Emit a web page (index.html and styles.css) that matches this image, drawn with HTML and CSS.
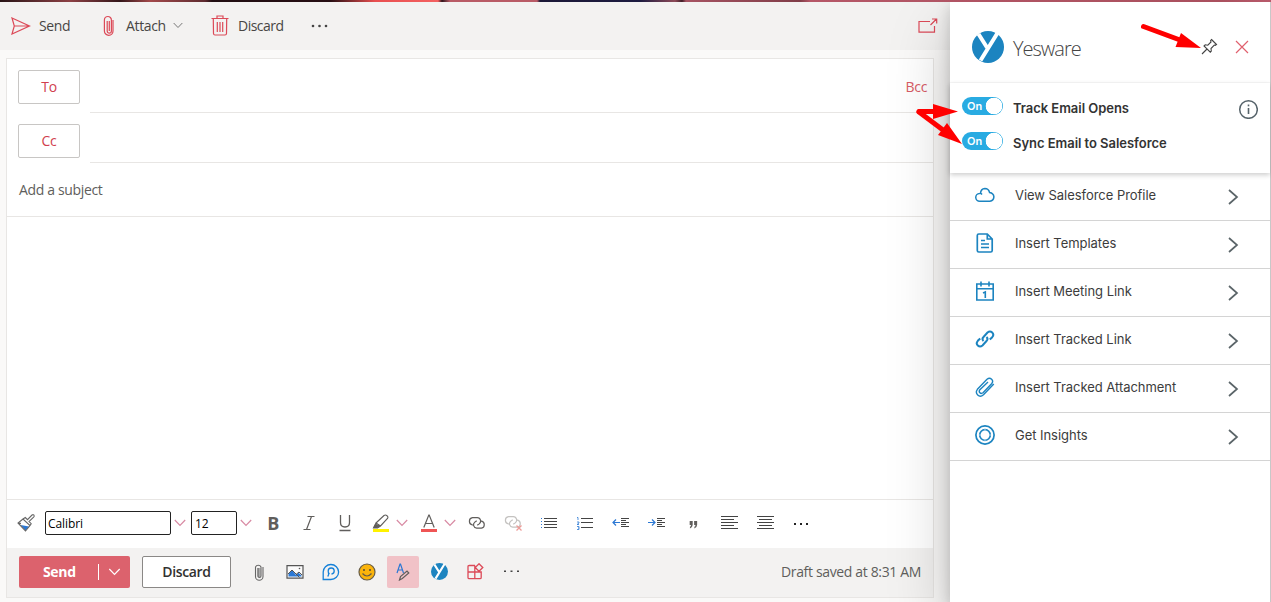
FILE: index.html
```html
<!DOCTYPE html>
<html lang="en">
<head>
<meta charset="utf-8">
<title>Compose</title>
<link rel="stylesheet" href="styles.css">
</head>
<body>
<svg width="0" height="0" class="defs">
  <symbol id="chev" viewBox="0 0 12 8"><path d="M.8 1l5.2 5.400L11.2 1" fill="none" stroke="currentColor" stroke-width="1.200"/></symbol>
  <symbol id="next" viewBox="0 0 12 18"><path d="M2 2l8 7-8 7" fill="none" stroke="#5a6468" stroke-width="1.700"/></symbol>
  <symbol id="logo" viewBox="0 0 32 32"><circle cx="16" cy="16" r="16" fill="#1c84c0"/><path d="M6.500 3L15 16.500M25.500 2L8.500 29.500" stroke="#fff" stroke-width="4" fill="none"/></symbol>
  <symbol id="links" viewBox="0 0 18 14"><path d="M6 9H4.500A3.700 3.700 0 0 1 4.500 1.700h4.800a3.400 3.400 0 0 1 1.700 6.300M12 5.200h1.500a3.600 3.600 0 0 1 0 7H8.700a3.400 3.400 0 0 1-1.700-6.200q.7-1 2-1M11 8q-.8 1-2 1" fill="none" stroke="currentColor" stroke-width="1.200"/></symbol>
</svg>
<div class="app">
  <div class="photo"></div>
  <div class="workspace">
    <main class="compose">
      <header class="commands">
        <svg class="c-send" width="20" height="18" viewBox="0 0 20 18" fill="none" stroke="#dc4a58" stroke-width="1.200"><path d="M1 1l17.500 8L1 17l2.300-8zM3.300 9h15"/></svg>
        <span class="t-send">Send</span>
        <svg class="c-clip" width="12" height="22" viewBox="0 0 12 22" fill="none" stroke="#dc4a58" stroke-width="1.200"><path d="M10 5v11a4.300 4.300 0 0 1-8.600 0V5a3.500 3.500 0 0 1 7 0v11a2.100 2.100 0 0 1-4.200 0V6"/><path d="M6.300 6v10"/></svg>
        <span class="t-attach">Attach</span>
        <svg class="c-chev" width="10" height="7"><use href="#chev"/></svg>
        <svg class="c-bin" width="18" height="21" viewBox="0 0 18 21" fill="none" stroke="#dc4a58" stroke-width="1.200"><path d="M.5 3.500h17M6 3.500V1h6v2.500M2.300 4l.2 14.500q.1 1.500 1.500 1.500h10q1.400 0 1.500-1.500L15.700 4M6.300 7v10M9 7v10M11.700 7v10"/></svg>
        <span class="t-discard">Discard</span>
        <svg class="c-more" width="17" height="4" fill="#444"><circle cx="2" cy="2" r="1.300"/><circle cx="8.500" cy="2" r="1.300"/><circle cx="15" cy="2" r="1.300"/></svg>
        <svg class="c-pop" width="20" height="15" viewBox="0 0 20 15" fill="none" stroke="#dc4a58" stroke-width="1.200"><path d="M12 3.500H1v10.700h15.500V8M12.500 7L18.500 1M14 1h4.700v4.600"/></svg>
      </header>
      <section class="card">
        <div class="field to"><button class="who">To</button><div class="entry"><span class="bcc">Bcc</span></div></div>
        <div class="field cc"><button class="who">Cc</button><div class="entry"></div></div>
        <div class="subject"><span>Add a subject</span></div>
        <div class="message"></div>
        <div class="format">
          <svg class="brush" width="18" height="18" viewBox="0 0 18 18" fill="none" stroke="#666" stroke-width="1.100"><path d="M3.500 11L12 12.500 8.500 16.500z" fill="#2b78d4" stroke="none"/><path d="M6 5L1 9l7.500 8 4.500-5.500zM6 5l2.300-1.500 2.200 2.200L15 1q1.500-.8 2 .3.500 1-.4 1.900L12 7.500l2.200 2.200L13 11.500M1 9l3 .4"/></svg>
          <div class="box family">Calibri</div><svg class="pick" width="12" height="8"><use href="#chev"/></svg>
          <div class="box size">12</div><svg class="pick" width="12" height="8"><use href="#chev"/></svg>
          <div class="tools">
            <b class="slot bold">B</b>
            <span class="slot"><svg width="16" height="18" fill="none" stroke="#605e5c" stroke-width="1.200"><path d="M6.500 2.500h7M2.500 15.500h7M10.500 2.500l-5 13"/></svg></span>
            <span class="slot"><svg width="16" height="18" fill="none" stroke="#605e5c" stroke-width="1.300"><path d="M3.500 1v7.500q0 4.500 4.500 4.500t4.500-4.500V1M2.500 16.500h11"/></svg></span>
            <span class="slot wide"><svg width="18" height="18" viewBox="0 0 18 18" fill="none" stroke="#605e5c" stroke-width="1.100"><path d="M1 15h16v3H1z" fill="#fff200" stroke="none"/><path d="M4 9l8-7.500q1.500-1 3 .2t.5 2.800L8.500 12zM4 9L1.500 14h4l3-2"/><path d="M3.500 10.500L2 13.500h3l2.500-1.800z" fill="#605e5c"/></svg><svg class="pick" width="12" height="8"><use href="#chev"/></svg></span>
            <span class="slot wide"><svg width="18" height="18" fill="none" stroke="#605e5c" stroke-width="1.200"><path d="M1 15h16v3H1z" fill="#ef5555" stroke="none"/><path d="M3.800 13.500L8.800 1h.4l5 12.500M5.300 9.500h7.500"/></svg><svg class="pick" width="12" height="8"><use href="#chev"/></svg></span>
            <span class="slot"><svg class="chain" width="18" height="14"><use href="#links"/></svg></span>
            <span class="slot"><svg class="nochain" width="18" height="18" viewBox="0 0 18 18"><use href="#links" width="18" height="14" y="1"/><path d="M12.500 11.500l5 5M17.500 11.500l-5 5" stroke="#ed9b98" stroke-width="1.300"/></svg></span>
            <span class="slot"><svg width="18" height="14" shape-rendering="crispEdges"><path d="M4 2.500h13M4 5.500h13M4 8.500h13M4 11.500h13" stroke="#444"/><path d="M1 2.500h1M1 5.500h1M1 8.500h1M1 11.500h1" stroke="#2b78d4"/></svg></span>
            <span class="slot"><svg width="18" height="14"><path d="M5 2.500h12M5 6.500h12M5 11.500h12" stroke="#444"/><path d="M1 1.500h1V4M1 6h2v1L1 8.500h2M1 10.500h2v3H1M2 12h1" fill="none" stroke="#2b78d4" stroke-width=".8"/></svg></span>
            <span class="slot"><svg width="18" height="12"><path d="M9 1.500h8M9 3.500h5M9 5.500h8M9 7.500h5M9 9.500h8" stroke="#444"/><path d="M8 5.500H1M4 2.500l-3 3 3 3" fill="none" stroke="#2b78d4" stroke-width="1.200"/></svg></span>
            <span class="slot"><svg width="18" height="12"><path d="M9 1.500h8M9 3.500h5M9 5.500h8M9 7.500h5M9 9.500h8" stroke="#444"/><path d="M0 5.500h7M4 2.500l3 3-3 3" fill="none" stroke="#2b78d4" stroke-width="1.200"/></svg></span>
            <span class="slot"><svg class="quote" width="9" height="8" viewBox="0 0 10 9"><path d="M.7 0h3.400v4.200Q4 7.300 1 8.300V6.500q1.200-.6 1.200-2.100H.7zM5.700 0h3.400v4.200Q9 7.300 6 8.300V6.500q1.200-.6 1.200-2.100H5.700z" fill="#605e5c"/></svg></span>
            <span class="slot"><svg width="18" height="14"><path d="M1 .5h17M1 3.500h13M1 6.500h17M1 9.500h13M1 12.500h17" stroke="#444"/></svg></span>
            <span class="slot"><svg width="18" height="14"><path d="M1 .5h17M3 3.500h13M1 6.500h17M3 9.500h13M1 12.500h17" stroke="#444"/></svg></span>
            <span class="slot"><svg class="dots" width="15" height="2" fill="#222"><path d="M0 0h2v2H0zM6 0h2v2h-2zM12 0h2v2h-2z"/></svg></span>
          </div>
        </div>
        <footer class="foot">
          <button class="send"><span>Send</span><i></i><svg width="13" height="8"><use href="#chev"/></svg></button>
          <button class="discard"><span>Discard</span></button>
          <div class="extras">
            <span class="slot"><svg width="10" height="18" viewBox="0 0 10 18" fill="none" stroke="#666" stroke-width="1.100"><path d="M3.500 5h3v9h-3z" fill="#aaa" stroke="none"/><path d="M9 4v9.500a3.700 3.700 0 0 1-7.500 0V4A3 3 0 0 1 7 4v9a1.400 1.400 0 0 1-3 0V5"/></svg></span>
            <span class="slot"><svg width="18" height="14" viewBox="0 0 18 14"><path d="M1 .700h16v12.400H1z" fill="#fafafa" stroke="#555" stroke-width="1.200"/><path d="M2.500 11.500V9L6 5l4 5 2.500-2.200L15.500 10.500v1z" fill="#2b78d4"/><path d="M2 9L6 5l7.500 7.500M10 9.500l3-2.500L16 10" fill="none" stroke="#555"/><circle cx="13.500" cy="3.500" r=".8" fill="#555"/></svg></span>
            <span class="slot"><svg width="18" height="18" viewBox="0 0 18 18" fill="none" stroke="#1480d8" stroke-width="1.300"><path d="M1.200 16.500V9a7.700 7.500 0 1 1 7.700 7.500zM5.700 13.500Q7 12 6.500 9.500M7.500 11q-1.500-1-1.300-3a3 3 0 1 1 3.300 3"/></svg></span>
            <span class="slot"><svg width="18" height="18"><circle cx="9" cy="9" r="8" fill="#fbb40b" stroke="#665c48" stroke-width="1.200"/><circle cx="6" cy="7" r="1" fill="#554b38"/><circle cx="12" cy="7" r="1" fill="#554b38"/><path d="M4.500 10.500q4.500 5 9 0" fill="none" stroke="#665c48" stroke-width="1.200"/></svg></span>
            <span class="slot"><span class="active"><svg width="16" height="18" viewBox="0 0 16 18" fill="none"><path d="M2 10L5 1h.5l3 9M3 7h5" stroke="#2b78d4" stroke-width="1.200"/><path d="M4.500 17l1-3.500 6.500-5.500 1.800 2-6.500 5.500z" stroke="#605e5c" stroke-width="1.200"/></svg></span></span>
            <span class="slot"><svg width="17" height="17"><use href="#logo"/></svg></span>
            <span class="slot"><svg width="17" height="17" viewBox="0 0 17 17" fill="none" stroke="#dc4a58" stroke-width="1.300"><path d="M8 2.500H2.200Q1 2.500 1 3.700V14.500Q1 15.700 2.200 15.700H13q1.200 0 1.200-1.200V9H1M7.800 2.500v13M12 .8l3.800 3.700L12 8.300 8.200 4.500z"/></svg></span>
            <span class="slot"><svg width="15" height="3" fill="#444"><path d="M0 .5h2v1.500H0zM6.500 .5h2v1.500h-2zM13 .5h2v1.500h-2z"/></svg></span>
          </div>
          <span class="saved">Draft saved at 8:31 AM</span>
        </footer>
      </section>
    </main>
    <aside class="panel">
      <div class="brand">
        <svg width="32" height="32"><use href="#logo"/></svg><h1>Yesware</h1>
        <svg class="pin" width="17" height="17" viewBox="0 0 17 17" fill="none" stroke="#444" stroke-width="1.100"><path d="M10.500 1.500l5 5-1.200.8-1-.3-3.300 3.500.3 2.500-1 1.200L3 8l1.200-1.200 2.600.4L10 4l-.4-1.300zM6 11l-5 5"/></svg>
        <svg width="14" height="14" stroke="#e0606e" stroke-width="1.200"><path d="M1 1l12 12M13 1L1 13"/></svg>
      </div>
      <div class="settings">
        <div class="toggles">
          <div class="row"><span class="switch"><em>On</em></span><strong>Track Email Opens</strong></div>
          <div class="row"><span class="switch"><em>On</em></span><strong>Sync Email to Salesforce</strong></div>
        </div>
        <svg class="info" width="20" height="20" fill="none" stroke="#56636a"><circle cx="10.500" cy="10.500" r="8.800" stroke-width="1.500"/><path d="M10.500 9V15" stroke-width="1.600"/><path d="M10.500 5.500v1.800" stroke-width="1.600"/></svg>
      </div>
      <nav>
        <a class="item"><svg width="20" height="20" viewBox="0 0 20 20" fill="none" stroke="#1c84c0" stroke-width="1.500"><path d="M4.800 16.200A3.900 3.900 0 0 1 4.500 8.400q1.500-.2 2.500 1M5.500 8.400q.3-4.500 4.400-4.800 3.700 0 4.700 4 4 .7 4.300 4.300-.3 3.800-4 4.300H4.800"/></svg><span>View Salesforce Profile</span><svg class="go" width="12" height="18"><use href="#next"/></svg></a>
        <a class="item"><svg width="20" height="20" viewBox="0 0 20 20" fill="none" stroke="#1c84c0" stroke-width="1.700"><path d="M3.800 1h8.500L17.200 6v11.500q0 1.500-1.500 1.500H3.800q-1.500 0-1.500-1.500v-15Q2.300 1 3.800 1zM12.300 1v5h5M6 7.500h4M6 11h8M6 14.500h8"/></svg><span>Insert Templates</span><svg class="go" width="12" height="18"><use href="#next"/></svg></a>
        <a class="item"><svg width="20" height="20" viewBox="0 0 20 20" fill="none" stroke="#1c84c0" stroke-width="1.600"><path d="M1.800 3h16.400v16H1.800zM2 7.700h16M6 .5v5M14 .5v5M8 12l2.300-1V17"/></svg><span>Insert Meeting Link</span><svg class="go" width="12" height="18"><use href="#next"/></svg></a>
        <a class="item"><svg width="20" height="20" viewBox="0 0 20 20" fill="none" stroke="#1c84c0" stroke-width="2"><path d="M8.500 12q-2-2 0-4l4-4.500q2.500-2 4.700 0t0 4.700l-2.400 2.300M11.500 8q2 2 0 4l-4 4.500q-2.500 2-4.700 0t0-4.700l2.400-2.300"/></svg><span>Insert Tracked Link</span><svg class="go" width="12" height="18"><use href="#next"/></svg></a>
        <a class="item"><svg width="20" height="20" viewBox="0 0 20 20" fill="none" stroke="#1c84c0" stroke-width="1.400"><path d="M18.800 7L8.500 17.800q-3.200 2.800-5.800.2T2.400 12.300L12 2.200q2.500-2 4.600 0t0 4.600l-8.600 9q-1.800 1.300-3.100 0t0-3.100L13 5"/></svg><span>Insert Tracked Attachment</span><svg class="go" width="12" height="18"><use href="#next"/></svg></a>
        <a class="item"><svg width="20" height="20" viewBox="0 0 20 20" fill="none" stroke="#1c84c0" stroke-width="1.700"><circle cx="10" cy="10" r="9.100"/><circle cx="10" cy="10" r="5.300"/><path d="M10 4v1.500M10 14.500V16M4 10h1.500M14.500 10H16" stroke="#fff" stroke-width=".7"/></svg><span>Get Insights</span><svg class="go" width="12" height="18"><use href="#next"/></svg></a>
      </nav>
    </aside>
  </div>
  <svg class="arrows" width="1271" height="602" stroke="red" fill="red"><g stroke-width="5" stroke-linecap="round"><path d="M1143.500 26.500L1180 40"/><path d="M919 111.500h20"/><path d="M919 112l24 18"/></g><path stroke="none" d="M1201 48l-25.500-1 5.500-14zM958 111.500L933 119v-15zM962 144l-24-9 9-12z"/></svg>
</div>
</body>
</html>
```
FILE: styles.css
```css
* { box-sizing: border-box; }
body { margin: 0; font-family: "Open Sans", "Noto Sans", sans-serif; font-size: 14px; letter-spacing: -.35px; color: #484644; }
svg { display: block; flex: none; }
button { font: inherit; letter-spacing: inherit; margin: 0; padding: 0; }
.defs { position: absolute; }
.app { width: 1271px; height: 602px; display: flex; flex-direction: column; overflow: hidden; position: relative; }
.photo { height: 2px; flex: none; background: linear-gradient(90deg, #281416 0, #8d4145 70px, #331619 120px, #a3494b 150px, #5e2b30 205px, #210e12 212px, #260e13 330px, #e94f50 375px, #f36161 438px, #30141c 442px, #b95b66 450px, #b95b66 537px, #1b1837 540px, #1d1b40 640px, #8e4a58 675px, #401d27 682px, #a65362 686px, #803d48 800px, #b55767 810px, #aa505e 1220px, #b85a6b 1271px); }
.workspace { flex: 1; min-height: 0; display: flex; overflow: hidden; }
.compose { width: 950px; display: flex; flex-direction: column; background: #faf9f8; }
.commands { height: 48px; flex: none; background: #f3f2f1; display: flex; align-items: center; padding: 0 0 2px 11px; white-space: nowrap; }
.commands span { flex: none; padding-top: 1px; }
.c-send { margin-top: 1px; }
.t-send { margin-left: 8px; width: 64px; }
.c-clip { margin-top: 1px; }
.t-attach { margin-left: 11px; width: 47px; }
.c-chev { color: #777; }
.c-bin { margin-left: 28px; margin-top: 1px; }
.t-discard { margin-left: 9px; width: 73px; letter-spacing: -.5px; }
.c-more { margin-top: 1px; }
.c-pop { margin-left: 590px; }
.card { margin: 8px 16px 0 6px; height: 540px; width: 928px; border: 1px solid #e8e6e4; background: #fff; display: flex; flex-direction: column; }
.field { display: flex; align-items: flex-end; padding-left: 11px; flex: none; }
.to { height: 54px; }
.cc { height: 50px; }
.who { width: 62px; height: 34px; border: 1px solid #c8c6c4; border-radius: 2px; background: #fff; color: #d13f4e; font-weight: 500; padding-bottom: 2px; }
.to .who { margin-bottom: 9px; }
.cc .who { margin-bottom: 5px; }
.entry { margin-left: 10px; flex: 1; height: 50px; border-bottom: 1px solid #e8e6e4; display: flex; align-items: center; justify-content: flex-end; padding: 0 6px 2px 0; }
.bcc { color: #d85b66; }
.subject { height: 54px; flex: none; padding-left: 12px; display: flex; align-items: center; border-bottom: 1px solid #e8e6e4; color: #605e5c; }
.message { flex: 1; }
.format { height: 49px; flex: none; border-top: 1px solid #e8e6e4; display: flex; align-items: center; padding: 0 0 2px 10px; }
.box { height: 24px; border: 1px solid #222; border-radius: 2px; font-size: 12px; letter-spacing: -.1px; color: #000; line-height: 24px; padding-left: 2px; }
.family { width: 126px; margin-left: 10px; }
.size { width: 46px; margin-left: 5px; padding-left: 3px; }
.format > .pick { margin-left: 3px; }
.pick { color: #d88aa3; }
.tools, .extras { display: flex; align-items: center; }
.tools { margin-left: 3px; }
.slot { width: 36px; display: flex; align-items: center; justify-content: center; }
.wide { width: 48px; justify-content: flex-start; padding-left: 9px; gap: 6px; }
.bold { font-size: 18px; line-height: 20px; color: #605e5c; }
.chain { color: #605e5c; }
.nochain { color: #c4c2c0; }
.quote { margin-top: 3px; }
.dots { margin-top: 2px; }
.foot { height: 49px; flex: none; background: #f3f2f1; display: flex; align-items: center; padding: 0 0 2px 12px; }
.send { width: 111px; height: 32px; border: 0; border-radius: 2px; background: #dc626d; color: #fff; font-weight: 700; display: flex; align-items: center; padding-left: 24px; }
.send span { width: 55px; text-align: left; }
.send i { width: 1px; height: 16px; background: #fff; margin-right: 9px; }
.discard { width: 89px; height: 32px; margin-left: 12px; border: 1px solid #8a8886; border-radius: 2px; background: #fff; color: #323130; font-weight: 600; }
.extras { margin-left: 10px; }
.active { width: 32px; height: 32px; background: #f1c2c7; border-radius: 2px; display: grid; place-items: center; }
.saved { margin-left: auto; padding-right: 12px; color: #605e5c; white-space: nowrap; }
.panel { width: 321px; flex: none; background: #fff; border-right: 1px solid #c8c8c8; position: relative; letter-spacing: 0; box-shadow: 0 26px 58px rgba(0,0,0,.22), 0 5px 14px rgba(0,0,0,.18); }
.brand { height: 81px; border-bottom: 1px solid #f8f8f8; display: flex; align-items: center; padding: 9px 20px 0 22px; }
.brand h1 { margin: 3px 0 0 9px; font-size: 20px; letter-spacing: -1px; font-weight: 300; color: #444; width: 188px; }
.pin { margin-right: 17px; }
.settings { height: 90px; display: flex; justify-content: space-between; padding: 14px 12px 0; box-shadow: 0 2px 5px rgba(0,0,0,.2); }
.info { margin-top: 2px; }
.row { height: 35px; display: flex; align-items: flex-start; }
.switch { width: 41px; height: 18px; border-radius: 9px; background: radial-gradient(circle at 32px 9px, #fff 8px, #29abe2 8.6px); color: #fff; font: 600 11px/18px Inter, sans-serif; padding-left: 5px; }
.switch em { font-style: normal; }
.row strong { font: 600 13px/20px Inter, sans-serif; letter-spacing: -.04px; color: #333; margin: 1px 0 0 10px; white-space: nowrap; }
.item { height: 48px; border-bottom: 1px solid #d4d4d4; display: flex; align-items: center; padding: 0 31px 3px 25px; font: 13px Inter, sans-serif; letter-spacing: -.04px; color: #3c3c3c; }
.item span { margin-left: 20px; flex: 1; white-space: nowrap; }
.go { margin-top: 4px; }
.arrows { position: absolute; left: 0; top: 0; }
```
